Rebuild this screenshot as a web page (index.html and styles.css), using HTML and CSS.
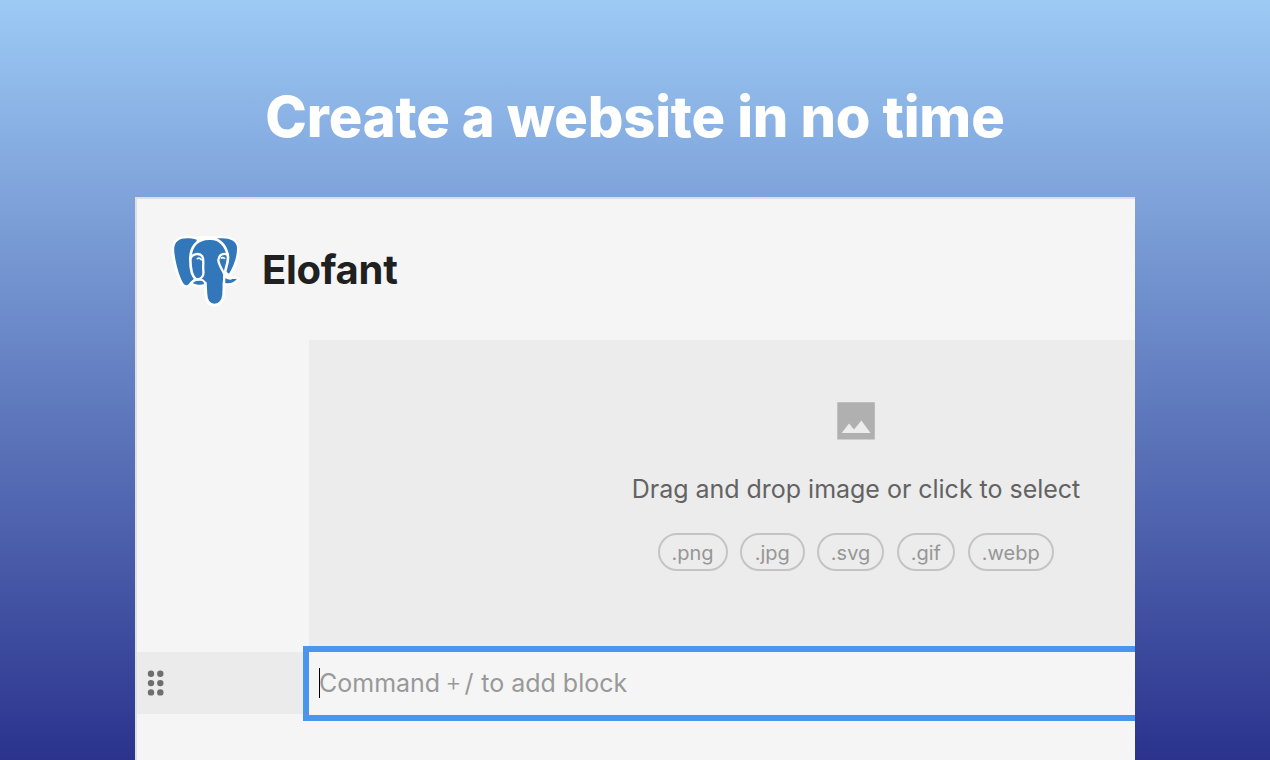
FILE: index.html
```html
<!DOCTYPE html>
<html lang="en">
<head>
<meta charset="utf-8">
<title>Elofant</title>
<link rel="stylesheet" href="styles.css">
</head>
<body>
<h1 class="headline"><span>Create a website in no time</span></h1>
<main class="window">
  <header class="brand">
    <svg class="logo" viewBox="0 0 270 270" aria-hidden="true">
      <g class="logo-halo">
        <path d="M106 44C88 38 66 38 54 47C42 55 41 70 44 90C48 120 58 152 68 172C75 184 83 182 91 173L108 155L180 155L207 146C222 122 232 94 230 68C228 45 200 37 172 43C150 41 125 38 106 44Z"/>
        <path d="M97 173C110 181 128 180 140 174L142 208C143 229 151 236 163 236C177 236 185 227 186 208L190 172C207 178 222 173 230 163L211 162L189 145L125 150Z"/>
      </g>
      <g class="logo-body">
        <path d="M110 44C88 38 66 38 54 47C42 55 41 70 44 90C48 120 58 152 68 172C75 184 83 182 91 173L108 155L110 80Z"/>
        <path d="M168 41C200 36 230 44 231 68C232 94 222 122 207 146L185 130Z"/>
        <path class="logo-head" d="M91 104C91 70 106 42 147 41C180 38 200 64 204 96C205 116 195 130 195 146L192 174L191 208C189 231 179 240 163 240C147 240 139 231 138 208L136 174L108 163C94 152 91 128 91 104Z"/>
        <path d="M97 173C107 165 120 164 136 165L139 175C127 181 110 181 97 173Z"/>
        <path d="M194 149C197 160 211 164 231 161C222 173 209 177 195 174Z"/>
      </g>
      <g class="logo-lines">
        <path d="M91 101C98 85 119 83 127 94C133 108 128 121 130 137C132 151 125 160 115 163C105 164 98 168 92 175"/>
        <path d="M112 163C128 163 134 166 136 177"/>
        <path d="M203 89C188 83 176 90 175 105C176 120 187 133 193 148C195 156 201 160 212 161"/>
        <path class="logo-jaw" d="M193 153L192 180"/>
        <path class="logo-eye" d="M112 101C117 98 121 100 124 104M184 99C187 97 191 98 194 100"/>
      </g>
    </svg>
    <span class="brand-name">Elofant</span>
  </header>
  <section class="dropzone">
    <svg class="picture" viewBox="0 0 38 38" aria-hidden="true">
      <path class="picture-frame" d="M0.3 0.2H37.8V37.4H0.3Z"/>
      <path class="picture-hills" d="M4.7 31L12 21.5L17 27.5L24.4 18.5L33.5 31Z"/>
    </svg>
    <p class="drop-text"><span>Drag and drop image or click to select</span></p>
    <div class="formats">
      <span class="pill png">.png</span>
      <span class="pill jpg">.jpg</span>
      <span class="pill svg">.svg</span>
      <span class="pill gif">.gif</span>
      <span class="pill webp">.webp</span>
    </div>
  </section>
  <div class="block-row">
    <div class="gutter">
      <svg class="handle" viewBox="0 0 18 28" aria-hidden="true">
        <circle cx="4" cy="4.8" r="3.2"/><circle cx="13.3" cy="4.8" r="3.2"/>
        <circle cx="4" cy="14.1" r="3.2"/><circle cx="13.3" cy="14.1" r="3.2"/>
        <circle cx="4" cy="23.4" r="3.2"/><circle cx="13.3" cy="23.4" r="3.2"/>
      </svg>
    </div>
    <div class="editor"><i class="caret"></i><span class="placeholder">Command<span class="keys"> <span class="plus">+</span> /</span> to add block</span></div>
  </div>
</main>
</body>
</html>
```
FILE: styles.css
```css
* { box-sizing: border-box; }
body {
  margin: 0;
  height: 760px;
  overflow: hidden;
  display: flex;
  flex-direction: column;
  align-items: center;
  background: linear-gradient(#9ccaf5, #2b338d);
  font-family: Inter, "Liberation Sans", sans-serif;
}
.headline {
  margin: 0;
  height: 197px;
  padding-top: 81px;
  flex: none;
  color: #fff;
  font-size: 56px;
  line-height: 72px;
  font-weight: 800;
  letter-spacing: -0.15px;
  white-space: nowrap;
}
.window {
  width: 1000px;
  height: 563px;
  flex: none;
  overflow: hidden;
  background: #f5f5f5;
  border-top: 2px solid #dddfe5;
  border-left: 2px solid #e0e0e2;
}
.brand {
  height: 141px;
  padding: 26px 0 0 23px;
  display: flex;
  align-items: flex-start;
}
.logo { width: 90px; height: 90px; flex: none; }
.logo-halo { fill: #fff; stroke: #fff; stroke-width: 16; stroke-linejoin: round; }
.logo-body { fill: #3277b9; }
.logo-head { stroke: #fff; stroke-width: 8; }
.logo-lines { fill: none; stroke: #fff; stroke-width: 7; stroke-linecap: round; stroke-linejoin: round; }
.logo-eye { stroke-width: 5; }
.brand-name {
  margin: 20px 0 0 12px;
  font-size: 40px;
  line-height: 50px;
  font-weight: 650;
  letter-spacing: -0.3px;
  color: #202020;
}
.dropzone {
  width: 1094px;
  height: 306px;
  margin-left: 172px;
  padding-top: 62px;
  display: flex;
  flex-direction: column;
  align-items: center;
  background: #ececec;
}
.picture { width: 38px; height: 38px; flex: none; }
.picture-frame { fill: #b0b0b0; }
.picture-hills { fill: #ececec; }
.drop-text {
  margin: 33px 0 0;
  font-size: 25px;
  line-height: 32px;
  letter-spacing: -0.02px;
  color: #636363;
  white-space: nowrap;
}
.formats { display: flex; gap: 12.5px; margin: 28px 0.4px 0 0; }
.pill {
  height: 38px;
  border: 2px solid #c4c4c4;
  border-radius: 19px;
  display: flex;
  align-items: center;
  justify-content: center;
  font-size: 20px;
  padding-top: 1px;
  color: #969696;
}
.png { width: 70px; }
.jpg { width: 64.5px; }
.svg { width: 67px; }
.gif { width: 58.5px; }
.webp { width: 86.5px; }
.block-row { display: flex; align-items: flex-start; height: 75px; }
.gutter {
  width: 166px;
  height: 62px;
  margin-top: 6px;
  flex: none;
  padding-left: 10px;
  display: flex;
  align-items: center;
  background: #ebebeb;
}
.handle { width: 18px; height: 28px; fill: #6e6e6e; }
.editor {
  position: relative;
  width: 900px;
  height: 75px;
  flex: none;
  border: 6px solid #4896ed;
  padding: 0 0 2px 10px;
  display: flex;
  align-items: center;
  font-size: 25px;
  color: #999;
  white-space: nowrap;
}
.keys { letter-spacing: -2px; margin-right: 2.6px; }
.plus { font-weight: 300; vertical-align: 1px; line-height: 1; }
.caret {
  position: absolute;
  left: 10px;
  top: 16px;
  width: 1px;
  height: 30px;
  background: #000;
}
```
